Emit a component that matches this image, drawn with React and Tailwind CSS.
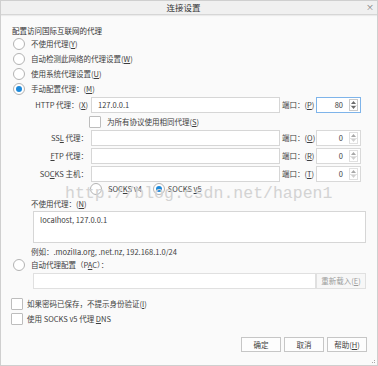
import React from "react";

function Radio({ checked }) {
  return (
    <span className="w-[12px] h-[12px] rounded-full border border-[#b3b3b3] bg-white flex items-center justify-center shrink-0">
      {checked && <span className="w-[6px] h-[6px] rounded-full bg-[#1d89d9]" />}
    </span>
  );
}

function Check() {
  return <span className="w-[12px] h-[12px] rounded-[1px] border border-[#bdbdbd] bg-white shrink-0" />;
}

function Spinner({ active }) {
  const c = active ? "#6b6b6b" : "#a8a8a8";
  const c2 = active ? "#6b6b6b" : "#d0d0d0";
  return (
    <div className={"flex flex-col w-[9px] h-[12px] border mr-[2px] " + (active ? "border-[#c9c9c9]" : "border-[#e0e0e0]")}>
      <div className="flex-1 flex items-center justify-center border-b border-[#e2e2e2]">
        <svg width="5" height="3" viewBox="0 0 5 3"><path d="M0 3 L2.5 0 L5 3 Z" fill={c} /></svg>
      </div>
      <div className="flex-1 flex items-center justify-center">
        <svg width="5" height="3" viewBox="0 0 5 3"><path d="M0 0 L2.5 3 L5 0 Z" fill={c2} /></svg>
      </div>
    </div>
  );
}

function Port({ value, focused }) {
  return (
    <div
      className={
        "ml-[2px] w-[45px] h-full bg-white border flex items-center justify-end " +
        (focused ? "border-[#7eb4ea]" : "border-[#d9d9d9]")
      }
    >
      <span className="pr-[6px]">{value}</span>
      <Spinner active={focused} />
    </div>
  );
}

function ProxyRow({ label, value, portLabel, port, focused, className }) {
  return (
    <div className={"flex h-[16px] items-center " + (className || "")}>
      <div className="w-[88px] text-right whitespace-nowrap pr-[1px]">{label}</div>
      <div className="ml-[2px] w-[189px] h-full bg-white border border-[#d6d6d6] flex items-center pl-[6px]">
        {value}
      </div>
      <div className="w-[34px] pl-[2px] whitespace-nowrap">{portLabel}</div>
      <Port value={port} focused={focused} />
    </div>
  );
}

function Btn({ children }) {
  return (
    <div className="w-[40px] h-[15px] border border-[#c6c6c6] bg-[#fdfdfd] flex items-center justify-center">
      {children}
    </div>
  );
}

export default function App() {
  return (
    <div className="relative w-[378px] h-[366px] overflow-hidden bg-[#fafafa] text-[#3d3d3d] text-[7.5px] leading-none font-['Noto_Sans_CJK_SC','Noto_Sans',sans-serif] border border-[#cfcfcf]">
      {/* title bar */}
      <div className="relative h-[14px] bg-[#f0f0f0] border-b border-[#d6d6d6] shadow-[0_1px_1px_rgba(0,0,0,0.06)] flex items-center justify-center pr-[11px]">
        <span className="text-[8.5px] text-[#333]">连接设置</span>
        <span className="absolute right-[3px] top-[2px] text-[8px] text-[#777]">×</span>
      </div>

      {/* heading */}
      <div className="mt-[10px] h-[11px] flex items-center pl-[11px] text-[#333]">配置访问国际互联网的代理</div>

      {/* radios */}
      <div className="flex flex-col">
        <div className="h-[15px] flex items-center pl-[12px] gap-[6px]">
          <Radio /> <span>不使用代理(<u>Y</u>)</span>
        </div>
        <div className="h-[15px] flex items-center pl-[12px] gap-[6px]">
          <Radio /> <span>自动检测此网络的代理设置(<u>W</u>)</span>
        </div>
        <div className="h-[15px] flex items-center pl-[12px] gap-[6px]">
          <Radio /> <span>使用系统代理设置(<u>U</u>)</span>
        </div>
        <div className="h-[15px] flex items-center pl-[12px] gap-[6px]">
          <Radio checked /> <span>手动配置代理：(<u>M</u>)</span>
        </div>
      </div>

      {/* manual proxy */}
      <ProxyRow
        className="mt-[1px]"
        label={<>HTTP 代理：(<u>X</u>)</>}
        value="127.0.0.1"
        portLabel={<>端口：(<u>P</u>)</>}
        port="80"
        focused
      />
      <div className="h-[17px] flex items-center pl-[88px] gap-[6px]">
        <Check />
        <span>为所有协议使用相同代理(<u>S</u>)</span>
      </div>
      <ProxyRow
        label={<>SS<u>L</u> 代理：</>}
        value=""
        portLabel={<>端口：(<u>O</u>)</>}
        port="0"
      />
      <ProxyRow
        className="mt-[2px]"
        label={<><u>F</u>TP 代理：</>}
        value=""
        portLabel={<>端口：(<u>R</u>)</>}
        port="0"
      />
      <ProxyRow
        className="mt-[2px]"
        label={<>SO<u>C</u>KS 主机：</>}
        value=""
        portLabel={<>端口：(<u>T</u>)</>}
        port="0"
      />
      <div className="h-[14px] flex items-center pl-[89px]">
        <Radio />
        <span className="ml-[6px]">SOC<u>K</u>S v4</span>
        <span className="ml-[11px]"><Radio checked /></span>
        <span className="ml-[3px]">SOCKS <u>v</u>5</span>
      </div>

      <div className="mt-[1px] h-[14px] flex items-center pl-[30px]">不使用代理：(<u>N</u>)</div>
      <div className="ml-[32px] w-[333px] h-[32px] bg-white border border-[#d6d6d6] pl-[6px] pt-[4px]">
        localhost, 127.0.0.1
      </div>
      <div className="mt-[2px] h-[13px] flex items-center pl-[30px]">例如：.mozilla.org, .net.nz, 192.168.1.0/24</div>
      <div className="h-[14px] flex items-center pl-[12px] gap-[6px]">
        <Radio />
        <span>自动代理配置（P<u>A</u>C）：</span>
      </div>
      <div className="mt-[1px] ml-[32px] w-[333px] h-[16px] flex">
        <div className="flex-1 h-full bg-white border border-[#e0e0e0]" />
        <div className="w-[50px] h-full border border-[#e0e0e0] bg-[#f7f7f7] flex items-center justify-center text-[#9b9b9b]">
          重新载入(<u>E</u>)
        </div>
      </div>

      <div className="mt-[7px] h-[15px] flex items-center pl-[10px] gap-[4px]">
        <Check />
        <span>如果密码已保存，不提示身份验证(<u>I</u>)</span>
      </div>
      <div className="h-[15px] flex items-center pl-[10px] gap-[4px]">
        <Check />
        <span>使用 SOCKS v5 代理 <u>D</u>NS</span>
      </div>

      <div className="mt-[11px] flex justify-end pr-[10px] gap-[3px]">
        <Btn>确定</Btn>
        <Btn>取消</Btn>
        <Btn>帮助(<u>H</u>)</Btn>
      </div>

      {/* resize grip */}
      <svg className="absolute right-[1px] bottom-[1px]" width="5" height="5" viewBox="0 0 5 5">
        <rect x="3" y="3" width="1" height="1" fill="#aaa" />
        <rect x="1" y="3" width="1" height="1" fill="#aaa" />
        <rect x="3" y="1" width="1" height="1" fill="#aaa" />
      </svg>

      {/* watermark */}
      <div className="absolute left-[64px] top-[185px] text-[16.5px] leading-[16.5px] font-['Liberation_Mono',monospace] text-[#d3d3d3] pointer-events-none whitespace-nowrap">
        http://blog.csdn.net/hapen1
      </div>
    </div>
  );
}
